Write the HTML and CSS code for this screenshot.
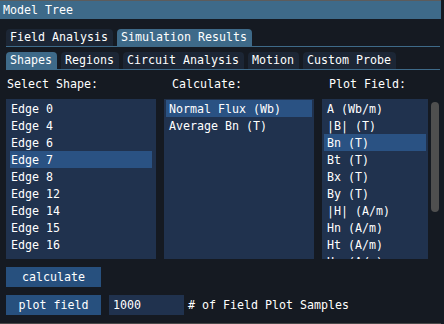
FILE: index.html
```html
<!DOCTYPE html>
<html>
<head>
<meta charset="utf-8">
<link rel="stylesheet" href="styles.css">
</head>
<body>
<div class="window">
  <div class="title">Model Tree</div>
  <div class="content">
    <div class="tabbar first">
      <div class="tab">Field Analysis</div>
      <div class="tab active">Simulation Results</div>
    </div>
    <div class="tabbar second">
      <div class="tab active">Shapes</div>
      <div class="tab">Regions</div>
      <div class="tab">Circuit Analysis</div>
      <div class="tab">Motion</div>
      <div class="tab">Custom Probe</div>
    </div>
    <div class="columns">
      <div class="col col-shape">
        <div class="label">Select Shape:</div>
        <div class="list wide">
          <div class="item">Edge 0</div>
          <div class="item">Edge 4</div>
          <div class="item">Edge 6</div>
          <div class="item sel">Edge 7</div>
          <div class="item">Edge 8</div>
          <div class="item">Edge 12</div>
          <div class="item">Edge 14</div>
          <div class="item">Edge 15</div>
          <div class="item">Edge 16</div>
        </div>
      </div>
      <div class="col col-calc">
        <div class="label">Calculate:</div>
        <div class="list narrow">
          <div class="item sel">Normal Flux (Wb)</div>
          <div class="item">Average Bn (T)</div>
        </div>
      </div>
      <div class="col col-plot">
        <div class="label">Plot Field:</div>
        <div class="plotwrap">
          <div class="list narrow plot">
            <div class="item">A (Wb/m)</div>
            <div class="item">|B| (T)</div>
            <div class="item sel">Bn (T)</div>
            <div class="item">Bt (T)</div>
            <div class="item">Bx (T)</div>
            <div class="item">By (T)</div>
            <div class="item">|H| (A/m)</div>
            <div class="item">Hn (A/m)</div>
            <div class="item">Ht (A/m)</div>
            <div class="item">Hx (A/m)</div>
          </div>
          <div class="scrolltrack"><div class="grab"></div></div>
        </div>
      </div>
    </div>
    <div class="actions">
      <div class="btn">calculate</div>
    </div>
    <div class="actions">
      <div class="btn">plot field</div>
      <div class="input">1000</div>
      <div class="inlabel"># of Field Plot Samples</div>
    </div>
  </div>
</div>
</body>
</html>
```
FILE: styles.css
```css
html, body {
  margin: 0;
  padding: 0;
  background: #151a22;
}
body {
  width: 444px;
  height: 324px;
  overflow: hidden;
  font-family: "DejaVu Sans Mono", "Liberation Mono", monospace;
  font-size: 11.63px;
  color: #ffffff;
}
.window {
  width: 441px;
  height: 322px;
  border-top: 1px solid #5c5c5c;
  border-bottom: 1px solid #4a4a4a;
  background: #151a22;
}
.title {
  height: 18px;
  line-height: 18px;
  padding-left: 3px;
  background: #3e6a89;
  white-space: pre;
}
.content {
  padding-left: 6px;
  width: 434px;
}
.tabbar {
  display: flex;
  gap: 4px;
  border-bottom: 1px solid #3e6a89;
}
.tabbar.first { margin-top: 10px; }
.tabbar.second { margin-top: 5px; }
.tab {
  height: 16px;
  line-height: 16px;
  padding: 0 5px 1px 4px;
  background: #1c2635;
  border-radius: 4px 4px 0 0;
  white-space: pre;
}
.tab.active { background: #3e6a89; }
.columns {
  display: flex;
  gap: 8px;
  margin-top: 8px;
}
.label {
  height: 13px;
  line-height: 13px;
  white-space: pre;
}
.col-shape { width: 150px; }
.col-shape .label { padding-left: 1px; }
.col-calc { width: 150px; }
.col-calc .label { padding-left: 8px; }
.col-plot { width: 118px; }
.col-plot .label { padding-left: 7px; }
.list {
  margin-top: 8px;
  height: 160px;
  background: #20324e;
  overflow: hidden;
  box-sizing: border-box;
  padding-top: 1px;
}
.list.wide { padding-left: 4px; padding-right: 4px; }
.list.narrow { padding-left: 2px; padding-right: 2px; }
.item {
  height: 16px;
  padding-top: 1px;
  line-height: 17px;
  white-space: pre;
}
.list.wide .item { padding-left: 1px; }
.list.narrow .item { padding-left: 3px; }
.item.sel { background: #2a5283; }
.plotwrap {
  display: flex;
}
.list.plot { width: 106px; flex: none; }
.scrolltrack {
  margin-top: 8px;
  width: 12px;
  height: 160px;
  padding-left: 3px;
  padding-top: 3px;
  box-sizing: border-box;
}
.grab {
  width: 8px;
  height: 110px;
  border-radius: 4px;
  background: #4f4f4f;
}
.actions {
  display: flex;
  align-items: center;
  margin-top: 8px;
  height: 20px;
}
.btn {
  width: 95px;
  height: 20px;
  line-height: 20px;
  text-align: center;
  background: #27507e;
  white-space: pre;
}
.input {
  margin-left: 8px;
  width: 71px;
  height: 20px;
  line-height: 20px;
  padding-left: 4px;
  background: #20324e;
  white-space: pre;
}
.inlabel {
  margin-left: 4px;
  line-height: 20px;
  white-space: pre;
}
```
